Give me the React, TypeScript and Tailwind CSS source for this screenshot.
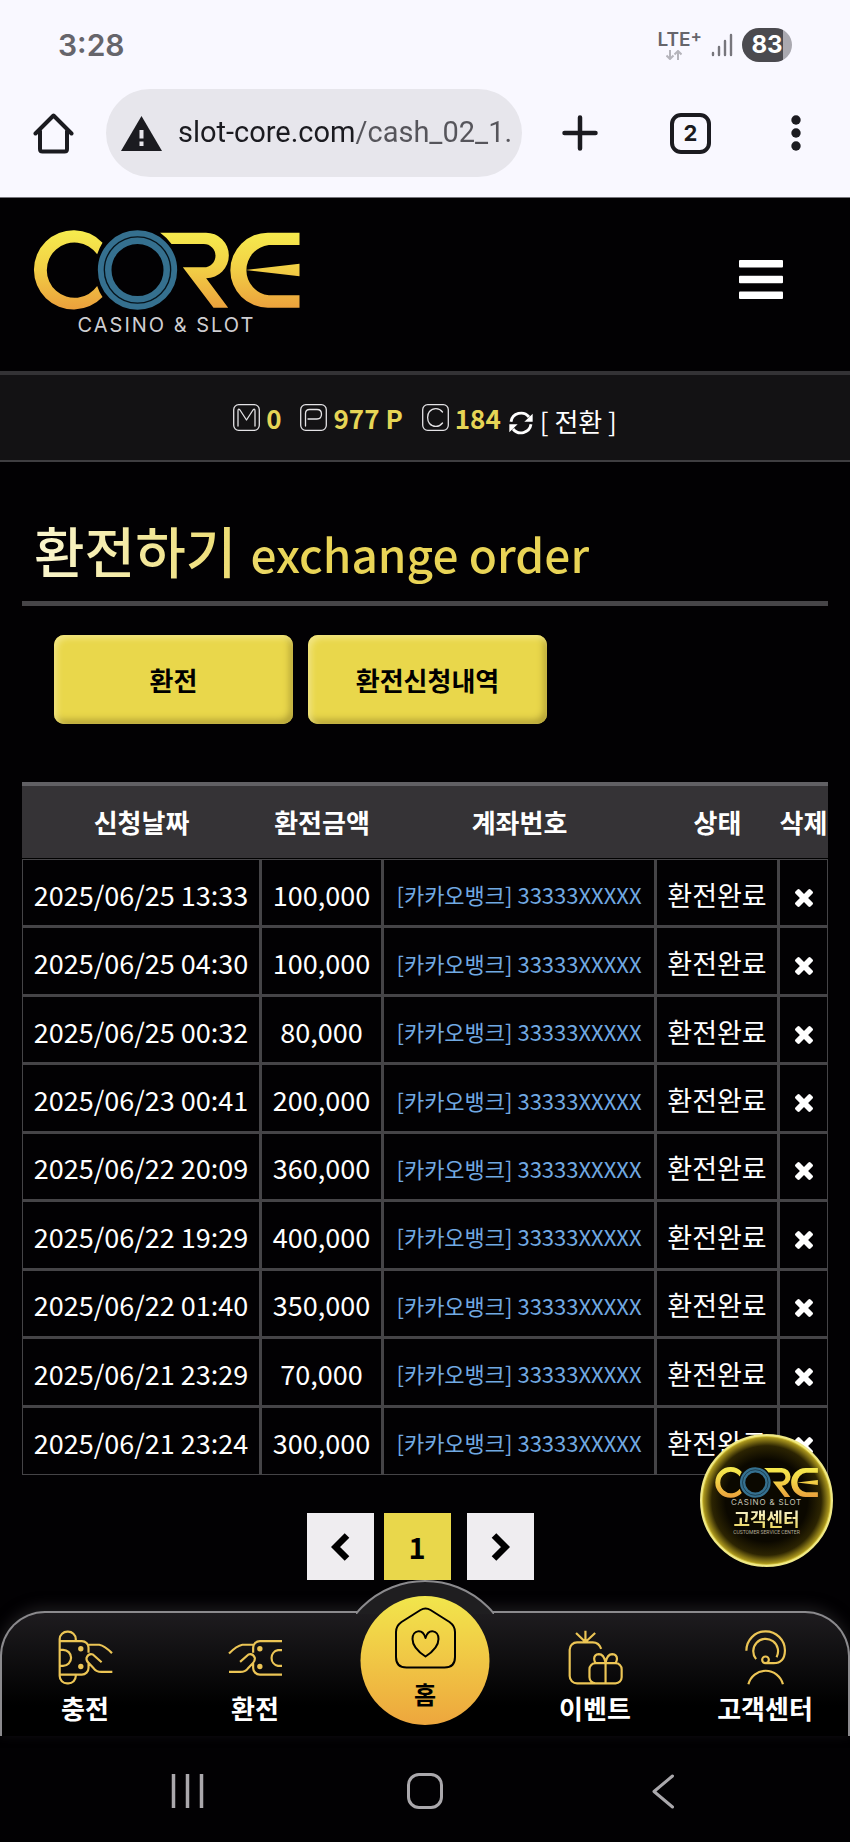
import React from "react";

type Withdrawal = { date: string; amount: string };

const withdrawals: Withdrawal[] = [
  { date: "2025/06/25 13:33", amount: "100,000" },
  { date: "2025/06/25 04:30", amount: "100,000" },
  { date: "2025/06/25 00:32", amount: "80,000" },
  { date: "2025/06/23 00:41", amount: "200,000" },
  { date: "2025/06/22 20:09", amount: "360,000" },
  { date: "2025/06/22 19:29", amount: "400,000" },
  { date: "2025/06/22 01:40", amount: "350,000" },
  { date: "2025/06/21 23:29", amount: "70,000" },
  { date: "2025/06/21 23:24", amount: "300,000" },
];

function CoreMark({ id, className }: { id: string; className: string }) {
  return (
    <svg viewBox="98 92 800 240" className={className} role="img" aria-label="CORE">
      <defs>
        <linearGradient id={id} gradientUnits="userSpaceOnUse" x1="0" y1="92" x2="0" y2="330">
          <stop offset="0" stopColor="#f6ec4e" />
          <stop offset="0.45" stopColor="#f2d246" />
          <stop offset="1" stopColor="#eba03c" />
        </linearGradient>
      </defs>
      <g fill={`url(#${id})`}>
        <path d="M306 130 A119 119 0 1 0 306 293 Q296 279 290 260 A83 83 0 1 1 290 165 Q296 146 306 130 Z" />
        <path d="M479 100 H616 A68.500 68.500 0 0 1 617 237 L683 325 H639 L547 204 H610 A35 35 0 0 0 610 134 H513 Q499 114 479 100 Z" />
        <path d="M897 100 H802 A112 112 0 0 0 802 325 H897 V288 H805 A76 76 0 0 1 805 137 H897 Z" />
        <path d="M735 212 L897 193 V231 Z" />
      </g>
      <circle cx="411" cy="212" r="98.500" fill="none" stroke="#35708f" strokeWidth="41" />
      <circle cx="411" cy="212" r="99.500" fill="none" stroke="#06141c" strokeWidth="4" />
    </svg>
  );
}

function PhoneChrome() {
  return (
    <header className="border-b border-[#77767c] bg-[#f9f8ff] text-[#1b1b20]">
      <div className="flex h-[89px] items-center justify-between pl-[58px] pr-[58px] font-['Inter',sans-serif]">
        <time className="text-[30px] font-semibold leading-none text-[#66656b]">3:28</time>
        <div className="flex items-center gap-[9px]">
          <div className="flex flex-col items-start text-[#66656b]">
            <span className="flex text-[19px] font-semibold leading-[20px]">
              LTE<sup className="top-0 text-[17px] leading-[12px]">+</sup>
            </span>
            <svg viewBox="0 0 16 10" className="ml-2 h-[10px] w-4" fill="none" stroke="#b5b4bb" strokeWidth="2" aria-hidden="true">
              <path d="M4 0 V9 M0.500 5.500 L4 9 L7.500 5.500 M12 10 V1 M8.500 4.500 L12 1 L15.500 4.500" />
            </svg>
          </div>
          <svg viewBox="0 0 22 24" className="h-6 w-[22px]" fill="none" stroke="#77767c" strokeWidth="2.400" strokeLinecap="round" aria-hidden="true">
            <path d="M2 20 V22 M8 14 V22 M14 8 V22 M20 2 V22" />
          </svg>
          <div className="flex h-[34px] w-[50px] items-center justify-center rounded-full bg-[linear-gradient(90deg,#4b4a4f_83%,#aaa9b0_83%)] text-[24px] font-bold leading-none text-white">
            83
          </div>
        </div>
      </div>
      <div className="flex items-center pb-5 pl-[33px] pr-[49px]">
        <button aria-label="Home page">
          <svg viewBox="0 0 41 41" className="size-[41px]" fill="none" stroke="#1b1b20" strokeWidth="4" strokeLinejoin="round" strokeLinecap="round" aria-hidden="true">
            <path d="M2.500 20.500 L20.500 2.500 L38.500 20.500 M7 18 V36 Q7 38.500 9.500 38.500 H31.500 Q34 38.500 34 36 V18" />
          </svg>
        </button>
        <label className="ml-8 flex h-[88px] flex-1 items-center gap-4 rounded-full bg-[#e7e6ec] pl-[15px] pr-1">
          <svg viewBox="0 0 41 35" className="h-[35px] w-[41px] shrink-0" aria-hidden="true">
            <path d="M20.500 0 L41 35 H0 Z" fill="#1b1b20" />
            <path d="M20.500 14 V22.500 M20.500 25.500 V30" stroke="#e7e6ec" strokeWidth="4" />
          </svg>
          <input
            aria-label="Address"
            readOnly
            value="slot-core.com/cash_02_1."
            className="w-0 flex-1 bg-[linear-gradient(90deg,#1b1b20_176px,#56555b_176px)] bg-clip-text font-['Roboto',sans-serif] text-[29px] text-transparent outline-none"
          />
        </label>
        <button className="ml-10" aria-label="New tab">
          <svg viewBox="0 0 36 36" className="size-9" stroke="#1b1b20" strokeWidth="4.500" strokeLinecap="round" aria-hidden="true">
            <path d="M18 2.500 V33.500 M2.500 18 H33.500" />
          </svg>
        </button>
        <button className="ml-[72px] flex size-[41px] items-center justify-center rounded-[11px] border-4 border-[#1b1b20] font-['Inter',sans-serif] text-[22px] font-bold leading-none" aria-label="Open tabs">
          2
        </button>
        <button className="ml-20" aria-label="Browser menu">
          <svg viewBox="0 0 10 36" className="h-9 w-[10px]" fill="#1b1b20" aria-hidden="true">
            <circle cx="5" cy="5" r="4.700" />
            <circle cx="5" cy="18" r="4.700" />
            <circle cx="5" cy="31" r="4.700" />
          </svg>
        </button>
      </div>
    </header>
  );
}

function BalanceIcon({ d }: { d: string }) {
  return (
    <svg viewBox="0 0 27 27" className="size-[27px]" fill="none" stroke="#e4e3e6" strokeWidth="1.300" strokeLinejoin="round" strokeLinecap="round" aria-hidden="true">
      <rect x="0.700" y="0.700" width="25.600" height="25.600" rx="5" />
      <path d={d} />
    </svg>
  );
}

function BalanceBar() {
  return (
    <section className="flex h-[91px] items-center justify-center border-b-2 border-t-4 border-b-[#3f3e41] border-t-[#333235] bg-[#131214] text-[26px] leading-none" aria-label="잔액">
      <div className="flex items-center gap-[6px] font-bold text-[#e6d556]">
        <BalanceIcon d="M5 22 V7 Q5 4 7 6 L13.500 16 L20 6 Q22 4 22 7 V22" />
        <span>0</span>
      </div>
      <div className="ml-[19px] flex items-center gap-[6px] font-bold text-[#e6d556]">
        <BalanceIcon d="M5.500 22 V9.500 Q5.500 5.500 9.500 5.500 H17 Q21.500 5.500 21.500 10 Q21.500 15 17 15 H8" />
        <span>977 P</span>
      </div>
      <div className="ml-[19px] flex items-center gap-[6px] font-bold text-[#e6d556]">
        <BalanceIcon d="M20.500 8 C17 3.500 11 3.500 7.500 7.500 C5 10.500 5 16.500 7.500 19.500 C11 23.500 17 23.500 20.500 19" />
        <span>184</span>
      </div>
      <button className="ml-2 flex items-center gap-[7px] pt-[6px] leading-none text-white">
        <svg viewBox="0 0 72 72" className="mt-1 size-6" fill="currentColor" aria-hidden="true">
          <path d="M6 32 A30.500 30.500 0 0 1 60 18 M66 40 A30.500 30.500 0 0 1 12 54" fill="none" stroke="currentColor" strokeWidth="8.500" />
          <path d="M71 8 V32 H46 Z M1 64 V40 H26 Z" />
        </svg>
        <span>[ 전환 ]</span>
      </button>
    </section>
  );
}

function DeleteIcon() {
  return (
    <svg viewBox="110 366 1188 1188" className="mx-auto size-[18px]" fill="currentColor" aria-hidden="true">
      <path d="M1298 1322q0 40-28 68l-136 136q-28 28-68 28t-68-28l-294-294-294 294q-28 28-68 28t-68-28l-136-136q-28-28-28-68t28-68l294-294-294-294q-28-28-28-68t28-68l136-136q28-28 68-28t68 28l294 294 294-294q28-28 68-28t68 28l136 136q28 28 28 68t-28 68l-294 294 294 294q28 28 28 68z" />
    </svg>
  );
}

const cell =
  "border border-r-2 border-b-2 border-[#454447] px-0 pt-[3px] pb-0 last:border-r group-last:border-b";

function HistoryTable() {
  return (
    <table className="h-[693px] w-full table-fixed border-separate border-spacing-0 text-center text-[27px] leading-none whitespace-nowrap text-white">
      <colgroup>
        <col className="w-[239px]" />
        <col className="w-[122px]" />
        <col />
        <col className="w-[123px]" />
        <col className="w-[49px]" />
      </colgroup>
      <thead>
        <tr className="h-[77px] bg-[#353336] text-[26px]">
          {["신청날짜", "환전금액", "계좌번호", "상태", "삭제"].map((name) => (
            <th key={name} className="border-t-4 border-b border-t-[#616064] border-b-black p-0 font-bold">
              {name}
            </th>
          ))}
        </tr>
      </thead>
      <tbody>
        {withdrawals.map((row) => (
          <tr key={row.date} className="group h-[68px]">
            <td className={cell}>{row.date}</td>
            <td className={cell}>{row.amount}</td>
            <td className={`${cell} text-[22px] text-[#71a9e2]`}>[카카오뱅크] 33333XXXXX</td>
            <td className={cell}>환전완료</td>
            <td className={cell}>
              <button className="block w-full pt-[7px]" aria-label="삭제">
                <DeleteIcon />
              </button>
            </td>
          </tr>
        ))}
      </tbody>
    </table>
  );
}

function Pagination() {
  return (
    <nav className="mt-[38px] flex justify-center pb-[30px] pr-[10px] text-black" aria-label="페이지">
      <button className="flex size-[67px] items-center justify-center bg-[#efedf0]" aria-label="이전">
        <svg viewBox="0 0 19 28" className="h-7 w-[19px]" fill="none" stroke="currentColor" strokeWidth="6.500" aria-hidden="true">
          <path d="M16 2.500 L4.500 14 L16 25.500" />
        </svg>
      </button>
      <button className="ml-[10px] flex size-[67px] items-center justify-center bg-[#e9d74b] text-[29px] font-bold leading-none" aria-current="page">
        1
      </button>
      <button className="ml-4 flex size-[67px] items-center justify-center bg-[#efedf0]" aria-label="다음">
        <svg viewBox="0 0 19 28" className="h-7 w-[19px]" fill="none" stroke="currentColor" strokeWidth="6.500" aria-hidden="true">
          <path d="M3 2.500 L14.500 14 L3 25.500" />
        </svg>
      </button>
    </nav>
  );
}

function SupportBadge() {
  return (
    <a
      href="#support"
      className="absolute right-[17px] bottom-11 flex size-[133px] flex-col items-center rounded-full border-2 border-[#efe887] bg-[radial-gradient(circle,#0b0800_45%,#2c2402_60%,#a8941c_69%,#efe25c_71%)] pt-[31px]"
    >
      <CoreMark id="badge-gold" className="h-[31px] w-[103px]" />
      <span className="text-[8px] leading-[9px] tracking-widest whitespace-nowrap text-[#c9c5b8] font-['Inter',sans-serif]">CASINO &amp; SLOT</span>
      <span className="mt-px bg-linear-to-b from-[#f8f5d8] to-[#ecd75c] bg-clip-text text-[18px] font-bold leading-[20px] whitespace-nowrap text-transparent">고객센터</span>
      <span className="mt-px text-[5px] leading-[7px] whitespace-nowrap text-[#b5ae98] font-['Roboto',sans-serif]">CUSTOMER SERVICE CENTER</span>
    </a>
  );
}

function ActionButton({ children }: { children: React.ReactNode }) {
  return (
    <button className="h-[89px] w-[239px] rounded-[10px] bg-[#e9d74b] text-[26px] font-bold leading-none text-black shadow-[inset_3px_3px_6px_#f3e786,inset_-3px_-4px_7px_#b09f34]">
      {children}
    </button>
  );
}

const navItems = {
  deposit: {
    label: "충전",
    box: "173 207 164 164",
    d: "M178 340 V234 a23 23 0 0 1 23 -22 h2 a23 23 0 0 1 23 22 v6 M178 340 v4 a22 22 0 0 0 22 22 h4 a22 22 0 0 0 22 -22 v-4 M178 240 H244 a20 20 0 0 1 20 20 v15 M264 306 v14 a20 20 0 0 1 -20 20 H178 M180 266 h8 a24 24 0 0 1 0 48 h-8 M262 251 H296 Q312 254 334 276 M303 303 L277 280 Q264 276 258 290 Q257 299 264 305 L280 322 Q288 332 302 332 H335",
    dots: [[241, 263], [241, 316]],
  },
  withdraw: {
    label: "환전",
    box: "683 207 164 164",
    d: "M844 240 H778 a20 20 0 0 0 -20 20 v15 M758 306 v14 a20 20 0 0 0 20 20 H844 M844 267 H832 a24 24 0 0 0 0 47 H844 M760 251 H726 Q709 254 686 277 M719 302 L744 280 Q757 276 763 290 Q764 299 757 306 L742 322 Q734 332 720 332 H686",
    dots: [[778, 263], [778, 316]],
  },
  event: {
    label: "이벤트",
    box: "428 207 164 164",
    d: "M480 209 V242 M452 216 L480 243 L509 216 M527 263 Q520 244 502 244 H455 a22 22 0 0 0 -22 22 V344 a22 22 0 0 0 22 22 H512 M510 306 H570 a18 18 0 0 1 18 18 v24 a18 18 0 0 1 -18 18 H510 a18 18 0 0 1 -18 -18 v-24 a18 18 0 0 1 18 -18 Z M540 300 V366 M540 304 Q535 279 520 279 Q506 280 506 293 Q506 300 510 305 M540 304 Q545 279 560 279 Q574 280 574 293 Q574 300 570 305",
    dots: [],
  },
  support: {
    label: "고객센터",
    box: "938 207 164 164",
    d: "M963 269 A57 57 0 0 1 1078 268 Q1077 306 1044 306 H1024 M992 294 A37 37 0 1 1 1053 288 M1030 296 A10 10 0 1 1 1010 296 A10 10 0 1 1 1030 296 M969 369 A53 53 0 0 1 1072 369",
    dots: [],
  },
};

function NavItem({ item }: { item: { label: string; box: string; d: string; dots: number[][] } }) {
  return (
    <a href={`#${item.label}`} className="flex flex-1 flex-col items-center pt-[17px] text-[26px] font-bold leading-none text-white">
      <svg viewBox={item.box} className="size-[55px]" fill="none" stroke="#ecc555" strokeWidth="6.500" strokeLinejoin="round" aria-hidden="true">
        <path d={item.d} />
        {item.dots.map(([x, y]) => (
          <circle key={y} cx={x} cy={y} r="8" fill="#ecc555" stroke="none" />
        ))}
      </svg>
      <span className="mt-[10px]">{item.label}</span>
    </a>
  );
}

function BottomNav() {
  return (
    <nav className="relative h-[125px]" aria-label="주요 메뉴">
      <div className="h-full rounded-t-[45px] border-2 border-b-0 border-[#8b8a8d] bg-[linear-gradient(180deg,#1e1c1f,#000_75%)] shadow-[0_-4px_14px_#1c1b1d]">
        <div className="-mx-0.5 flex">
          <NavItem item={navItems.deposit} />
          <NavItem item={navItems.withdraw} />
          <div className="flex-1" />
          <NavItem item={navItems.event} />
          <NavItem item={navItems.support} />
        </div>
      </div>
      <div className="absolute -top-[31px] left-1/2 flex h-[34px] w-[138px] -translate-x-1/2 justify-center overflow-hidden" aria-hidden="true">
        <div className="size-[180px] shrink-0 rounded-full border-2 border-[#8b8a8d] bg-[#1f1e20]" />
      </div>
      <a
        href="#home"
        className="absolute -top-[15px] left-1/2 flex size-[129px] -translate-x-1/2 flex-col items-center rounded-full bg-linear-to-b from-[#f1e64c] to-[#eda63d] pt-[11px] text-[24px] font-bold leading-none text-black"
      >
        <svg viewBox="0 0 62 62" className="size-[62px]" fill="none" stroke="currentColor" strokeWidth="2" strokeLinejoin="round" aria-hidden="true">
          <path d="M26 3 Q31 0 36 3 L55 15 Q60.500 19 60.500 25 V50 Q60.500 60.500 50 60.500 H12 Q1.500 60.500 1.500 50 V25 Q1.500 19 7 15 Z" />
          <path d="M31 49.500 C24 45 18 39 18 32 C18 23 28 21 31 31 C34 21 44 23 44 32 C44 39 38 45 31 49.500 Z" />
        </svg>
        <span className="mt-[13px]">홈</span>
      </a>
    </nav>
  );
}

function SystemBar() {
  return (
    <footer className="grid h-[106px] grid-cols-3 place-items-center px-[68px] pt-1">
      <button aria-label="Recent apps">
        <svg viewBox="0 0 33 34" className="h-[34px] w-[33px]" stroke="#aaa8ac" strokeWidth="3.500" aria-hidden="true">
          <path d="M2.500 0 V34 M16.500 0 V34 M30.500 0 V34" />
        </svg>
      </button>
      <button aria-label="Home" className="h-9 w-9 rounded-[12px] border-[3px] border-[#aaa8ac]" />
      <button aria-label="Back">
        <svg viewBox="0 0 23 35" className="h-[35px] w-[23px]" fill="none" stroke="#aaa8ac" strokeWidth="3" strokeLinecap="round" strokeLinejoin="round" aria-hidden="true">
          <path d="M20.500 2 L2 17.500 L20.500 33" />
        </svg>
      </button>
    </footer>
  );
}

export default function App() {
  return (
    <div className="flex min-h-screen flex-col bg-[#020103] font-['Noto_Sans_CJK_KR','Noto_Sans',sans-serif]">
      <PhoneChrome />
      <div className="flex h-[173px] items-start justify-between pt-[32px] pl-[33px] pr-[67px]">
        <a href="#top" className="flex flex-col items-center">
          <CoreMark id="header-gold" className="h-[80px] w-[267px]" />
          <span className="mt-1 text-[20px] leading-[22px] tracking-widest text-[#cfced2] font-['Inter',sans-serif]">CASINO &amp; SLOT</span>
        </a>
        <button className="mt-[30px]" aria-label="메뉴">
          <svg viewBox="0 0 44 39" className="h-[39px] w-11" fill="#fff" aria-hidden="true">
            <rect width="44" height="7.500" rx="1" />
            <rect y="15.700" width="44" height="7.500" rx="1" />
            <rect y="31.400" width="44" height="7.500" rx="1" />
          </svg>
        </button>
      </div>
      <BalanceBar />
      <main className="relative flex-1 px-[22px] pt-[43px]">
        <h1 className="flex h-[101px] items-center border-b-[5px] border-[#464548] pb-1 pl-3 font-medium">
          <span className="flex items-baseline gap-[14px] bg-[linear-gradient(90deg,#faf6cf,#e9d456_260px)] bg-clip-text leading-[80px] text-transparent">
            <span className="text-[55px]">환전하기</span>
            <span className="text-[46px]">exchange order</span>
          </span>
        </h1>
        <div className="mt-[29px] flex gap-[15px] pl-8">
          <ActionButton>환전</ActionButton>
          <ActionButton>환전신청내역</ActionButton>
        </div>
        <div className="pt-[58px]">
          <HistoryTable />
        </div>
        <Pagination />
        <SupportBadge />
      </main>
      <BottomNav />
      <SystemBar />
    </div>
  );
}
